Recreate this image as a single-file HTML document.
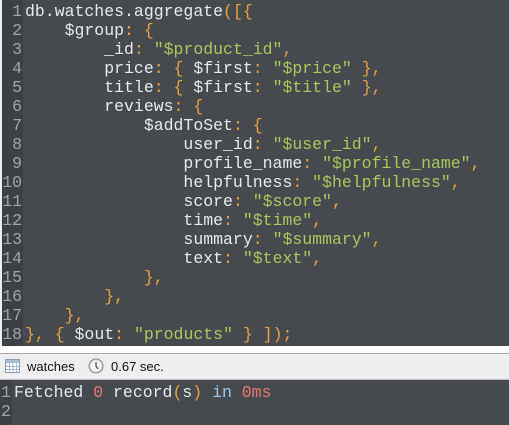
<!DOCTYPE html>
<html><head><style>
body{margin:0;width:509px;height:425px;overflow:hidden;background:#eee;}
#ed{position:absolute;left:2px;top:0;width:507px;height:346px;background:#464a4e;}
#gut{position:absolute;left:0;top:0;width:21px;height:346px;background:#3d4145;overflow:hidden;}
pre{margin:0;font-family:"Liberation Mono","Courier New","Cousine","DejaVu Sans Mono",monospace;font-size:16.5px;line-height:19px;}
#ln{position:absolute;right:1px;top:2px;color:#a0a4a8;text-align:right;}
#code{position:absolute;left:23px;top:2px;color:#e4e9ee;}
.o{color:#e8a23c}.s{color:#a7c75c}.r{color:#e6786e}.b{color:#9cc4e8}
#wh{position:absolute;left:0;top:346px;width:509px;height:7px;background:#fff;}
#sb{position:absolute;left:0;top:353px;width:509px;height:25px;border-top:1px solid #a8a8a8;border-bottom:1px solid #b8b8b8;background:#eeeeee;font-family:"Liberation Sans",sans-serif;font-size:13px;color:#111;}
#out{position:absolute;left:0;top:380px;width:509px;height:45px;background:#464a4e;}
#og{position:absolute;left:0;top:0;width:12px;height:45px;background:#3d4145;overflow:hidden;}
</style></head><body>
<div id="ed"><div id="gut"><pre id="ln">1
2
3
4
5
6
7
8
9
10
11
12
13
14
15
16
17
18</pre></div>
<pre id="code">db.watches.aggregate<span class="o">([{</span>
    $group<span class="o">: {</span>
        _id<span class="o">:</span> <span class="s">"$product_id"</span><span class="o">,</span>
        price<span class="o">: {</span> $first<span class="o">:</span> <span class="s">"$price"</span> <span class="o">},</span>
        title<span class="o">: {</span> $first<span class="o">:</span> <span class="s">"$title"</span> <span class="o">},</span>
        reviews<span class="o">: {</span>
            $addToSet<span class="o">: {</span>
                user_id<span class="o">:</span> <span class="s">"$user_id"</span><span class="o">,</span>
                profile_name<span class="o">:</span> <span class="s">"$profile_name"</span><span class="o">,</span>
                helpfulness<span class="o">:</span> <span class="s">"$helpfulness"</span><span class="o">,</span>
                score<span class="o">:</span> <span class="s">"$score"</span><span class="o">,</span>
                time<span class="o">:</span> <span class="s">"$time"</span><span class="o">,</span>
                summary<span class="o">:</span> <span class="s">"$summary"</span><span class="o">,</span>
                text<span class="o">:</span> <span class="s">"$text"</span><span class="o">,</span>
            <span class="o">},</span>
        <span class="o">},</span>
    <span class="o">},</span>
<span class="o">}, {</span> $out<span class="o">:</span> <span class="s">"products"</span> <span class="o">} ]);</span></pre>
</div>
<div id="wh"></div>
<div id="sb">
<svg style="position:absolute;left:5px;top:5px" width="15" height="14"><rect x="0.5" y="0.5" width="14" height="13" fill="#fff" stroke="#8aa0b8"/><rect x="1" y="1" width="13" height="3" fill="#a8bcd4"/><path d="M1 7.5H14M1 10.5H14M4.5 4V13M8 4V13M11.5 4V13" stroke="#a8b8cc"/></svg>
<span style="position:absolute;left:27px;top:5px">watches</span>
<svg style="position:absolute;left:88px;top:4px" width="16" height="16"><circle cx="8" cy="8" r="7" fill="#d8d8d8" stroke="#888"/><circle cx="8" cy="8" r="5.5" fill="#f4f4f4"/><path d="M8 4V8L10 11" stroke="#444" stroke-width="1.2" fill="none"/></svg>
<span style="position:absolute;left:111px;top:5px">0.67 sec.</span>
</div>
<div id="out"><div id="og"><pre style="position:absolute;left:1px;top:3px;color:#a0a4a8">1
2</pre></div>
<pre style="position:absolute;left:14px;top:3px;color:#e4e9ee">Fetched <span class="r">0</span> record<span class="o">(</span>s<span class="o">)</span> <span class="b">in</span> <span class="r">0ms</span></pre></div>
</body></html>
